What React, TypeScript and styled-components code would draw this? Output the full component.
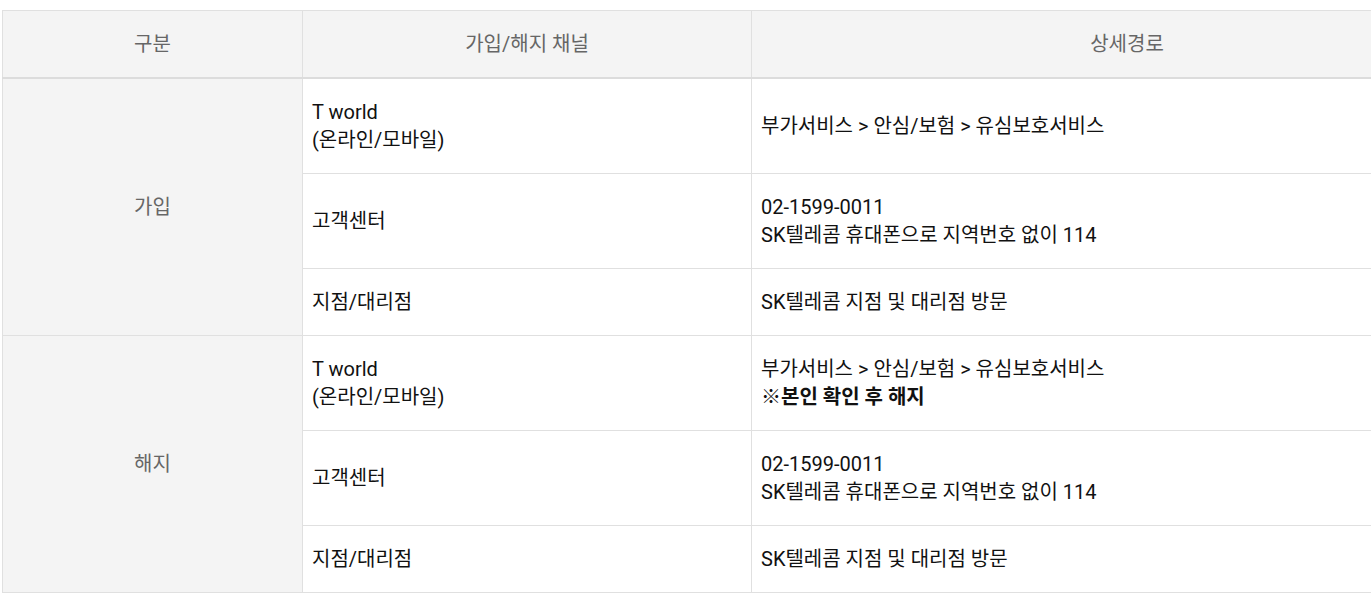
import React from 'react'
import styled, { createGlobalStyle } from 'styled-components'

const GlobalStyle = createGlobalStyle`
  html, body {
    margin: 0;
    padding: 0;
    background: #fff;
  }
  body {
    font-family: Roboto, 'Noto Sans CJK KR', sans-serif;
  }
`

const Wrapper = styled.div`
  padding: 10px 0 0 2px;
  overflow: hidden;
`

const Table = styled.table`
  width: 1501px;
  border-collapse: collapse;
  table-layout: fixed;
  font-size: 20px;
  line-height: 28px;
  color: #111;
  border-top: 1px solid #e0e0e0;
  border-bottom: 1px solid #e0e0e0;
`

const HeadCell = styled.th`
  background: #f4f4f4;
  color: #666;
  font-weight: 400;
  text-align: center;
  padding: 19px 9px;
  border: 1px solid #e0e0e0;
  border-bottom: 2px solid #dcdcdc;
`

const GroupCell = styled.td`
  background: #f4f4f4;
  color: #666;
  text-align: center;
  vertical-align: middle;
  padding: 19px 9px;
  border: 1px solid #e0e0e0;
`

const Cell = styled.td`
  text-align: left;
  vertical-align: middle;
  padding: 19px 9px;
  border: 1px solid #e0e0e0;
`

const Strong = styled.strong`
  font-weight: 700;
`

type Row = { channel: React.ReactNode; path: React.ReactNode }

const callCenter = (
  <>
    02-1599-0011
    <br />
    SK텔레콤 휴대폰으로 지역번호 없이 114
  </>
)

const tworld = (
  <>
    T world
    <br />
    (온라인/모바일)
  </>
)

const groups: { label: string; rows: Row[] }[] = [
  {
    label: '가입',
    rows: [
      { channel: tworld, path: '부가서비스 > 안심/보험 > 유심보호서비스' },
      { channel: '고객센터', path: callCenter },
      { channel: '지점/대리점', path: 'SK텔레콤 지점 및 대리점 방문' },
    ],
  },
  {
    label: '해지',
    rows: [
      {
        channel: tworld,
        path: (
          <>
            부가서비스 &gt; 안심/보험 &gt; 유심보호서비스
            <br />
            <Strong>※본인 확인 후 해지</Strong>
          </>
        ),
      },
      { channel: '고객센터', path: callCenter },
      { channel: '지점/대리점', path: 'SK텔레콤 지점 및 대리점 방문' },
    ],
  },
]

export default function App() {
  return (
    <>
      <GlobalStyle />
      <Wrapper>
        <Table>
          <colgroup>
            <col style={{ width: 300 }} />
            <col style={{ width: 449 }} />
            <col />
          </colgroup>
          <thead>
            <tr>
              <HeadCell>구분</HeadCell>
              <HeadCell>가입/해지 채널</HeadCell>
              <HeadCell>상세경로</HeadCell>
            </tr>
          </thead>
          <tbody>
            {groups.map((g) =>
              g.rows.map((r, i) => (
                <tr key={g.label + i}>
                  {i === 0 && <GroupCell rowSpan={g.rows.length}>{g.label}</GroupCell>}
                  <Cell>{r.channel}</Cell>
                  <Cell>{r.path}</Cell>
                </tr>
              ))
            )}
          </tbody>
        </Table>
      </Wrapper>
    </>
  )
}
